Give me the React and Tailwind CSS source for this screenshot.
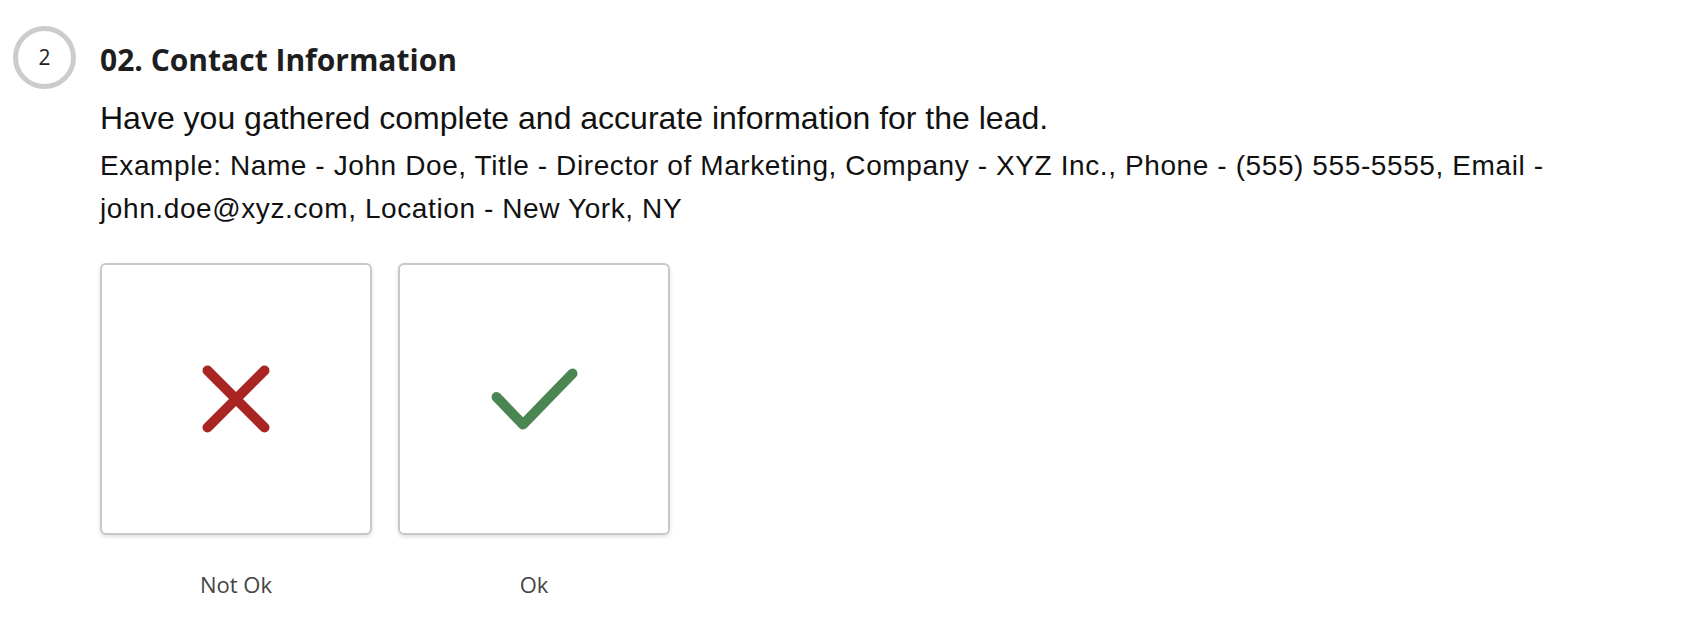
import React from 'react';

const ui = { fontFamily: '"Open Sans", "Noto Sans", sans-serif' };
const arial = { fontFamily: '"Liberation Sans", Arial, sans-serif' };

const CrossIcon = () => (
  <svg width="68" height="68" viewBox="0 0 68 68" fill="none">
    <path d="M5.5 5.5 L62.5 62.5 M62.5 5.5 L5.5 62.5" stroke="#a82523" strokeWidth="10" strokeLinecap="round" />
  </svg>
);

const CheckIcon = () => (
  <svg width="88" height="63" viewBox="0 0 88 63" fill="none">
    <path d="M6.5 29 L33 56.5 L82.5 5.5" stroke="#4b8552" strokeWidth="10" strokeLinecap="round" strokeLinejoin="round" />
  </svg>
);

const Choice = ({ label, children }) => (
  <div className="flex flex-col items-center w-[272px]">
    <button className="w-[272px] h-[272px] bg-white border-2 border-[#c8c8c8] rounded-[6px] shadow-[0_2px_4px_rgba(0,0,0,0.12)] flex items-center justify-center">
      {children}
    </button>
    <span className="mt-[34px] text-[22px] text-[#444444] leading-[30px]" style={ui}>
      {label}
    </span>
  </div>
);

export default function App() {
  return (
    <div className="min-h-screen bg-white">
      <div className="flex gap-[24px] pl-[13px] pt-[26px]">
        <div
          className="w-[63px] h-[63px] shrink-0 rounded-full border-[5px] border-[#cccccc] flex items-center justify-center text-[21px] text-[#222222]"
          style={ui}
        >
          2
        </div>
        <div className="flex flex-col">
          <h2 className="text-[30px] font-bold text-[#1e1e1e] leading-[40px] mt-[14px]" style={ui}>
            02. Contact Information
          </h2>
          <p className="text-[32px] text-[#111111] leading-[40px] mt-[18px]" style={arial}>
            Have you gathered complete and accurate information for the lead.
          </p>
          <p className="text-[28px] tracking-[0.6px] text-[#111111] leading-[42.5px] mt-[7px] max-w-[1490px]" style={arial}>
            Example: Name - John Doe, Title - Director of Marketing, Company - XYZ Inc., Phone - (555) 555-5555, Email - john.doe@xyz.com, Location - New York, NY
          </p>
          <div className="flex gap-[26px] mt-[33px]">
            <Choice label="Not Ok">
              <CrossIcon />
            </Choice>
            <Choice label="Ok">
              <CheckIcon />
            </Choice>
          </div>
        </div>
      </div>
    </div>
  );
}
